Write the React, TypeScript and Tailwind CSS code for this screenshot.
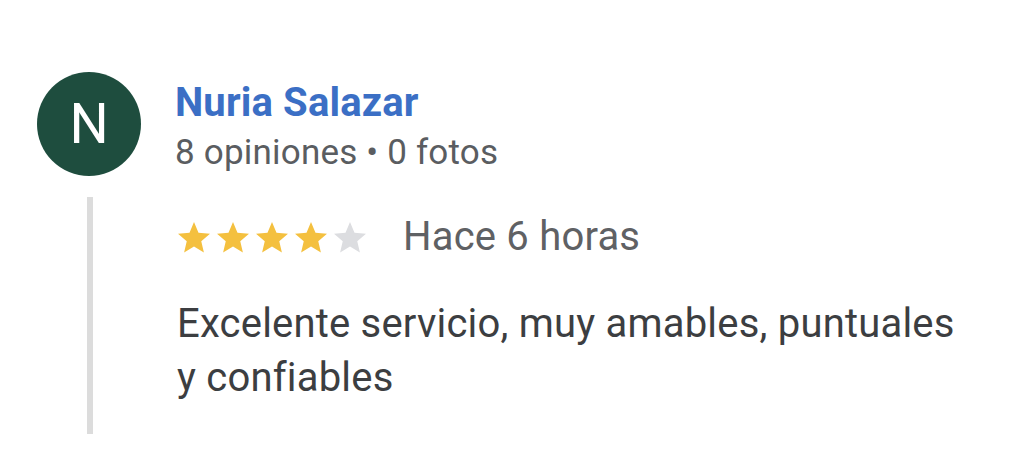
const stars = [true, true, true, true, false];

function Star({ filled }: { filled: boolean }) {
  return (
    <svg viewBox="2 2 20 19.3" className="h-[31px] w-[32px]" fill={filled ? '#f4c03f' : '#dcdde0'}>
      <path d="M12 17.27L18.18 21l-1.64-7.03L22 9.24l-7.19-.61L12 2 9.19 8.63 2 9.24l5.46 4.73L5.82 21z" />
    </svg>
  );
}

export default function App() {
  return (
    <div className="h-[455px] w-[1035px] bg-white font-['Roboto',sans-serif] pt-[72px]">
      {/* Header */}
      <div className="flex items-start">
        <div className="ml-[37px] flex h-[104px] w-[104px] shrink-0 items-center justify-center rounded-full bg-[#1e4d3e] text-[55px] leading-none text-white">
          N
        </div>
        <div className="ml-[34px] mt-[7px]">
          <p className="text-[40px] font-bold leading-[48px] tracking-[0.15px] text-[#3b6fc5]">Nuria Salazar</p>
          <p className="mt-[5px] text-[35px] leading-[42px] tracking-[0.2px] text-[#5a5d61]">8 opiniones • 0 fotos</p>
        </div>
      </div>

      {/* Review body */}
      <div className="ml-[87px] mt-[21px] h-[237px] border-l-[6px] border-[#dcdcdc] pl-[84px]">
        <div className="flex h-[48px] items-center pt-[16px] box-content">
          <div className="ml-[1px] flex gap-[7px]">
            {stars.map((s, i) => (
              <Star key={i} filled={s} />
            ))}
          </div>
          <span className="ml-[37px] text-[40px] leading-[48px] tracking-[0.2px] text-[#5f6164]">Hace 6 horas</span>
        </div>
        <p className="mt-[36px] text-[40px] leading-[54px] tracking-[0.2px] text-[#3c3e41]">
          Excelente servicio, muy amables, puntuales
          <br />y confiables
        </p>
      </div>
    </div>
  );
}
